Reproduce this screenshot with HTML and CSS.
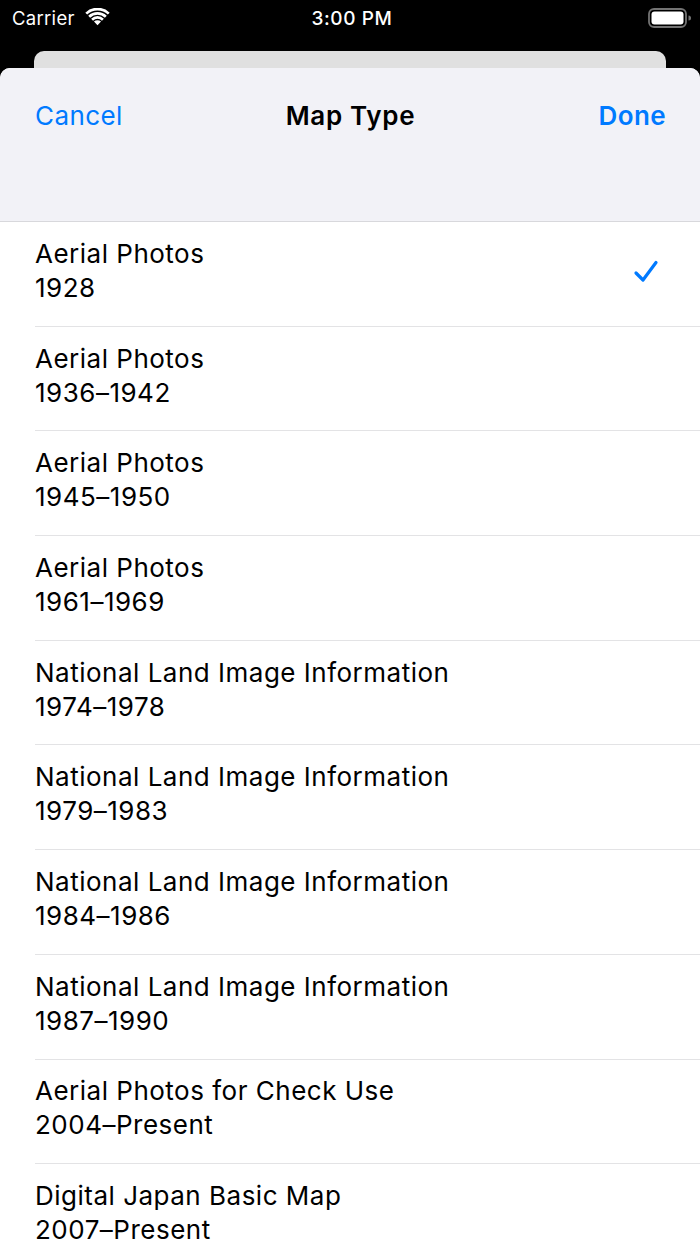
FILE: index.html
```html
<!DOCTYPE html>
<html>
<head>
<meta charset="utf-8">
<link rel="stylesheet" href="styles.css">
</head>
<body>
<div class="screen">
  <div class="status">
    <div class="status-left">
      <span class="carrier">Carrier</span>
      <svg class="wifi" width="25" height="18" viewBox="0 0 24 17">
        <path d="M12 16.5 L8.6 12.9 A5 5 0 0 1 15.4 12.9 Z" fill="#fff"/>
        <path d="M5.9 10.1 A8.8 8.8 0 0 1 18.1 10.1 L16.3 12 A6.2 6.2 0 0 0 7.7 12 Z" fill="#fff"/>
        <path d="M3.1 7.2 A12.8 12.8 0 0 1 20.9 7.2 L19.1 9.1 A10.2 10.2 0 0 0 4.9 9.1 Z" fill="#fff"/>
        <path d="M0.3 4.3 A16.8 16.8 0 0 1 23.7 4.3 L21.9 6.2 A14.2 14.2 0 0 0 2.1 6.2 Z" fill="#fff"/>
      </svg>
    </div>
    <div class="time">3:00 PM</div>
    <div class="status-right">
      <svg width="44" height="20" viewBox="0 0 44 20">
        <rect x="1" y="1" width="37" height="18" rx="5" fill="none" stroke="#fff" stroke-opacity="0.45" stroke-width="1.8"/>
        <rect x="3.5" y="3.5" width="32" height="13" rx="3" fill="#fff"/>
        <path d="M40.5 7.5 A2.5 2.5 0 0 1 40.5 12.5 Z" fill="#fff" fill-opacity="0.45"/>
      </svg>
    </div>
  </div>
  <div class="back-card"></div>
  <div class="sheet">
    <div class="nav">
      <span class="nav-btn">Cancel</span>
      <span class="nav-title">Map Type</span>
      <span class="nav-btn done">Done</span>
    </div>
    <ul class="list">
      <li class="row"><div class="label"><div>Aerial Photos</div><div>1928</div></div>
        <svg class="check" width="26" height="26" viewBox="0 0 26 26"><path d="M3 14 L10 21 L23 3.5" fill="none" stroke="#007aff" stroke-width="3.2" stroke-linecap="round" stroke-linejoin="round"/></svg>
      </li>
      <li class="row"><div class="label"><div>Aerial Photos</div><div>1936–1942</div></div></li>
      <li class="row"><div class="label"><div>Aerial Photos</div><div>1945–1950</div></div></li>
      <li class="row"><div class="label"><div>Aerial Photos</div><div>1961–1969</div></div></li>
      <li class="row"><div class="label"><div>National Land Image Information</div><div>1974–1978</div></div></li>
      <li class="row"><div class="label"><div>National Land Image Information</div><div>1979–1983</div></div></li>
      <li class="row"><div class="label"><div>National Land Image Information</div><div>1984–1986</div></div></li>
      <li class="row"><div class="label"><div>National Land Image Information</div><div>1987–1990</div></div></li>
      <li class="row"><div class="label"><div>Aerial Photos for Check Use</div><div>2004–Present</div></div></li>
      <li class="row"><div class="label"><div>Digital Japan Basic Map</div><div>2007–Present</div></div></li>
    </ul>
  </div>
</div>
</body>
</html>
```

FILE: styles.css
```css
html, body {
  margin: 0;
  padding: 0;
}
body {
  background: #000;
  font-family: Inter, "Liberation Sans", sans-serif;
  width: 700px;
  height: 1244px;
  overflow: hidden;
}
.screen {
  width: 700px;
  height: 1244px;
  position: relative;
  overflow: hidden;
  display: flex;
  flex-direction: column;
}
.status {
  height: 36px;
  display: flex;
  align-items: center;
  justify-content: space-between;
  color: #fff;
  padding: 0 8px 0 12px;
}
.status-left {
  display: flex;
  align-items: center;
  gap: 10px;
  width: 150px;
}
.carrier {
  font-size: 18.5px;
  letter-spacing: 0.3px;
}
.wifi {
  margin-top: -3px;
}
.time {
  font-size: 19px;
  font-weight: 500;
  letter-spacing: 0.6px;
}
.status-right {
  width: 150px;
  display: flex;
  justify-content: flex-end;
}
.back-card {
  margin: 15px 34px 0;
  height: 30px;
  background: #e0e0e0;
  border-radius: 10px 10px 0 0;
}
.sheet {
  margin-top: -13px;
  flex: 1;
  background: #fff;
  border-radius: 10px 10px 0 0;
  overflow: hidden;
}
.nav {
  height: 154px;
  background: #f2f2f7;
  border-bottom: 1px solid #d8d8dc;
  display: grid;
  grid-template-columns: 1fr auto 1fr;
  align-items: start;
  padding: 32px 34px 0 35px;
  box-sizing: border-box;
  font-size: 26px;
  letter-spacing: 0.4px;
}
.nav-btn {
  color: #007aff;
}
.nav-btn.done {
  font-weight: 600;
  justify-self: end;
}
.nav-title {
  font-weight: 600;
  color: #000;
  letter-spacing: 0.7px;
}
.list {
  list-style: none;
  margin: 0;
  padding: 0 0 0 35px;
}
.row {
  height: 104.7px;
  box-sizing: border-box;
  border-bottom: 1px solid #e3e3e5;
  display: flex;
  align-items: center;
  justify-content: space-between;
  padding-right: 40px;
  font-size: 26px;
  letter-spacing: 0.5px;
  line-height: 34px;
  color: #000;
}
.label {
  padding-bottom: 6px;
}
.check {
  margin-right: 1px;
  margin-bottom: 3px;
}
```
